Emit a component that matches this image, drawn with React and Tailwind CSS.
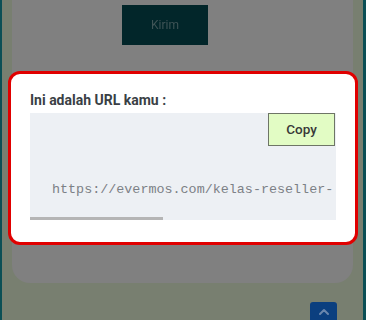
import React from "react";

const App = () => {
  return (
    <div className="relative w-[366px] h-[320px] overflow-hidden bg-[#0b4f55] font-['Roboto',sans-serif]">
      {/* Background page (dimmed, blurred) */}
      <div className="ml-[2px] mr-[3px] h-full bg-[#787f70] flex flex-col">
        <div className="mx-[10px] -mt-[20px] h-[303px] shrink-0 rounded-b-[18px] bg-[#808080] pl-[110px] pt-[25px] blur-[0.6px]">
          <div className="w-[86px] h-[40px] bg-[#02262a] flex items-center justify-center text-[12px] text-[#3f5456] blur-[0.5px]">
            Kirim
          </div>
        </div>
        <div className="flex justify-end pr-[26px] mt-[19px] blur-[0.6px]">
          <div className="w-[27px] h-[24px] rounded-t-[3px] bg-[#0b3f7f] flex justify-center pt-[6px]">
            <svg width="12" height="8" viewBox="0 0 12 8" fill="none">
              <path d="M2 6l4-4 4 4" stroke="#6a86ad" strokeWidth="2" strokeLinecap="round" strokeLinejoin="round" />
            </svg>
          </div>
        </div>
      </div>

      {/* Modal */}
      <div className="absolute left-[8px] top-[71px] w-[350px] h-[174px] rounded-[12px] border-[3px] border-[#e00000] bg-white px-[19px] pt-[16px]">
        <h3 className="text-[14px] leading-[20px] font-bold text-[#3a3f45]">
          Ini adalah URL kamu :
        </h3>
        <div className="mt-[3px] relative h-[107px] bg-[#edf0f4] overflow-hidden">
          <button className="absolute top-0 right-[1px] w-[67px] h-[33px] bg-[#e2fcc4] border border-[#6e7566] text-[13.5px] font-medium text-[#383838]">
            Copy
          </button>
          <div className="pt-[67px] pl-[22px] whitespace-nowrap font-['Liberation_Mono',monospace] text-[13.4px] leading-[20px] text-[#7c8086]">
            https://evermos.com/kelas-reseller-
          </div>
          <div className="absolute left-0 bottom-0 w-[133px] h-[3px] bg-[#b5b5b5]" />
        </div>
      </div>
    </div>
  );
};

export default App;
